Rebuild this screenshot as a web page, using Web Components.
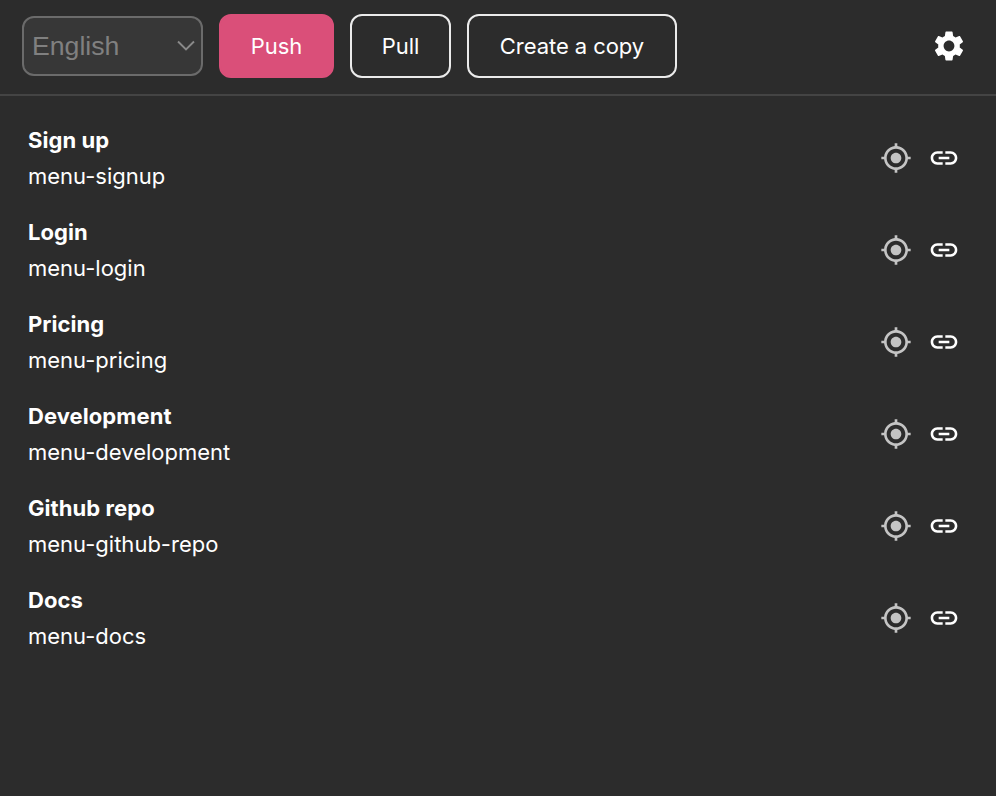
<!DOCTYPE html>
<html lang="en">
<head>
<meta charset="utf-8">
<title>Translations</title>
<style>
html,body{height:100%}
body{margin:0;background:#2c2c2c;color:#fff;font:400 22px/32px Inter,"Liberation Sans",sans-serif;overflow:hidden}
</style>
</head>
<body>
<strings-panel></strings-panel>
<script>
const define = (name, html) => {
  const t = document.createElement('template');
  t.innerHTML = html;
  customElements.define(name, class extends HTMLElement {
    constructor() {
      super();
      this.attachShadow({mode: 'open'}).append(t.content.cloneNode(true));
    }
  });
};

const icons = {
  gear: 'M19.14 12.94c.04-.3.06-.61.06-.94 0-.32-.02-.64-.07-.94l2.03-1.58c.18-.14.23-.41.12-.61l-1.92-3.32c-.12-.22-.37-.29-.59-.22l-2.39.96c-.5-.38-1.03-.7-1.62-.94l-.36-2.54c-.04-.24-.24-.41-.48-.41h-3.84c-.24 0-.43.17-.47.41l-.36 2.54c-.59.24-1.13.57-1.62.94l-2.39-.96c-.22-.08-.47 0-.59.22L2.74 8.87c-.12.21-.08.47.12.61l2.03 1.58c-.05.3-.09.63-.09.94s.02.64.07.94l-2.03 1.58c-.18.14-.23.41-.12.61l1.92 3.32c.12.22.37.29.59.22l2.39-.96c.5.38 1.03.7 1.62.94l.36 2.54c.05.24.24.41.48.41h3.84c.24 0 .44-.17.47-.41l.36-2.54c.59-.24 1.13-.56 1.62-.94l2.39.96c.22.08.47 0 .59-.22l1.92-3.32c.12-.22.07-.47-.12-.61l-2.01-1.58zM12 15.6c-1.98 0-3.6-1.62-3.6-3.6s1.62-3.6 3.6-3.6 3.6 1.62 3.6 3.6-1.62 3.6-3.6 3.6z',
  target: 'M12 8c-2.21 0-4 1.79-4 4s1.79 4 4 4 4-1.79 4-4-1.79-4-4-4zm8.94 3c-.46-4.17-3.77-7.48-7.94-7.94V1h-2v2.06C6.83 3.52 3.52 6.83 3.06 11H1v2h2.06c.46 4.17 3.77 7.48 7.94 7.94V23h2v-2.06c4.17-.46 7.48-3.77 7.94-7.94H23v-2h-2.06zM12 19c-3.87 0-7-3.13-7-7s3.13-7 7-7 7 3.13 7 7-3.13 7-7 7z',
  link: 'M3.9 12c0-1.71 1.39-3.1 3.1-3.1h4V7H7c-2.76 0-5 2.24-5 5s2.24 5 5 5h4v-1.9H7c-1.71 0-3.1-1.39-3.1-3.1zM8 13h8v-2H8v2zm9-6h-4v1.9h4c1.71 0 3.1 1.39 3.1 3.1s-1.39 3.1-3.1 3.1h-4V17h4c2.76 0 5-2.24 5-5s-2.24-5-5-5z'
};

customElements.define('ui-icon', class extends HTMLElement {
  constructor() {
    super();
    this.attachShadow({mode: 'open'});
  }
  connectedCallback() {
    this.shadowRoot.innerHTML = `<style>:host{display:block;width:32px;height:32px}svg{display:block;width:100%;height:100%;fill:currentColor}</style>
      <svg viewBox="0 0 24 24"><path d="${icons[this.getAttribute('name')]}"/></svg>`;
  }
});

define('ui-button', `<style>
  :host{display:flex;align-items:center;justify-content:center;box-sizing:border-box;width:var(--w,auto);height:64px;border:2px solid #ebebeb;border-radius:12px;letter-spacing:-.06px;white-space:nowrap}
  :host([primary]){background:#da4f79;border-color:#da4f79}
</style><slot></slot>`);

define('ui-select', `<style>
  :host{display:flex;align-items:center;justify-content:space-between;box-sizing:border-box;width:181px;height:60px;padding:0 6px 0 8px;border:2px solid #6b6b6b;border-radius:12px;background:#373737;color:#808080;font:26.67px/32px "Liberation Sans",Arial,sans-serif}
  svg{display:block;fill:none;stroke:#898989;stroke-width:1.9}
</style><span><slot></slot></span><svg width="18" height="12" viewBox="0 0 18 12"><path d="M1 1.5l8 8 8-8"/></svg>`);

define('key-row', `<style>
  :host{display:flex;justify-content:space-between;align-items:center;height:92px;box-sizing:border-box;padding:0 36px 0 28px}
  .text{line-height:36px;letter-spacing:0}
  .title{font-weight:700;letter-spacing:.07px}
  .actions{display:flex;gap:16px}
  .target{color:#c4c4c4}
</style>
<div class="text"><div class="title"><slot name="title"></slot></div><div><slot></slot></div></div>
<div class="actions"><ui-icon class="target" name="target"></ui-icon><ui-icon name="link"></ui-icon></div>`);

define('top-bar', `<style>
  :host{display:flex;align-items:center;gap:16px;box-sizing:border-box;height:96px;padding:0 29px 2px 22px;border-bottom:2px solid #444}
  .push{--w:115px}
  .pull{--w:101px}
  .copy{--w:210px}
  .gear{width:36px;height:36px;margin-left:auto}
</style>
<ui-select>English</ui-select><ui-button class="push" primary>Push</ui-button><ui-button class="pull">Pull</ui-button><ui-button class="copy">Create a copy</ui-button><ui-icon class="gear" name="gear"></ui-icon>`);

define('strings-panel', `<style>
  :host{display:flex;flex-direction:column;height:100vh}
  main{padding-top:16px}
</style>
<top-bar></top-bar>
<main>
<key-row><span slot="title">Sign up</span>menu-signup</key-row>
<key-row><span slot="title">Login</span>menu-login</key-row>
<key-row><span slot="title">Pricing</span>menu-pricing</key-row>
<key-row><span slot="title">Development</span>menu-development</key-row>
<key-row><span slot="title">Github repo</span>menu-github-repo</key-row>
<key-row><span slot="title">Docs</span>menu-docs</key-row>
</main>`);
</script>
</body>
</html>
